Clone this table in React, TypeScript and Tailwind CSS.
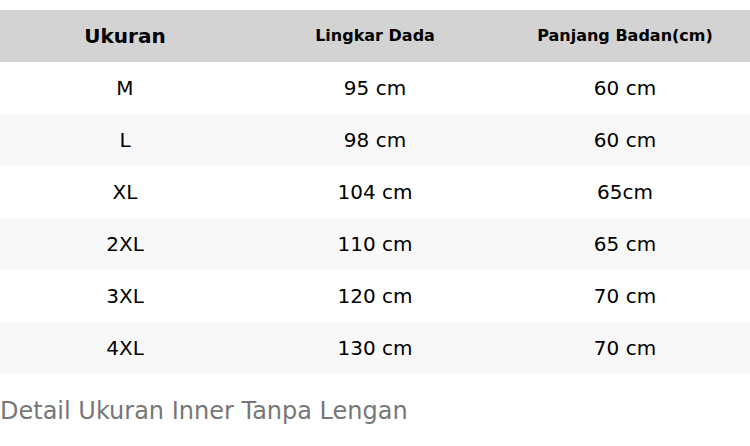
const rows = [
  ["M", "95 cm", "60 cm"],
  ["L", "98 cm", "60 cm"],
  ["XL", "104 cm", "65cm"],
  ["2XL", "110 cm", "65 cm"],
  ["3XL", "120 cm", "70 cm"],
  ["4XL", "130 cm", "70 cm"],
];

export default function App() {
  return (
    <div
      className="w-[750px] h-[446px] bg-white pt-[10px] text-black"
      style={{ fontFamily: '"DejaVu Sans", sans-serif' }}
    >
      <table className="w-full border-collapse table-fixed">
        <thead>
          <tr className="h-[52px] bg-[#d3d3d3]">
            <th className="text-[20px] font-bold">Ukuran</th>
            <th className="text-[16px] font-bold">Lingkar Dada</th>
            <th className="text-[16px] font-bold">Panjang Badan(cm)</th>
          </tr>
        </thead>
        <tbody>
          {rows.map((r, i) => (
            <tr
              key={r[0]}
              className={i % 2 === 1 ? "h-[52px] bg-[#f8f8f8]" : "h-[52px] bg-white"}
            >
              {r.map((c, j) => (
                <td key={j} className="text-center text-[20px]">
                  {c}
                </td>
              ))}
            </tr>
          ))}
        </tbody>
      </table>
      <p className="mt-[19px] text-[24px] leading-[36px] text-[#777777]">
        Detail Ukuran Inner Tanpa Lengan
      </p>
    </div>
  );
}
